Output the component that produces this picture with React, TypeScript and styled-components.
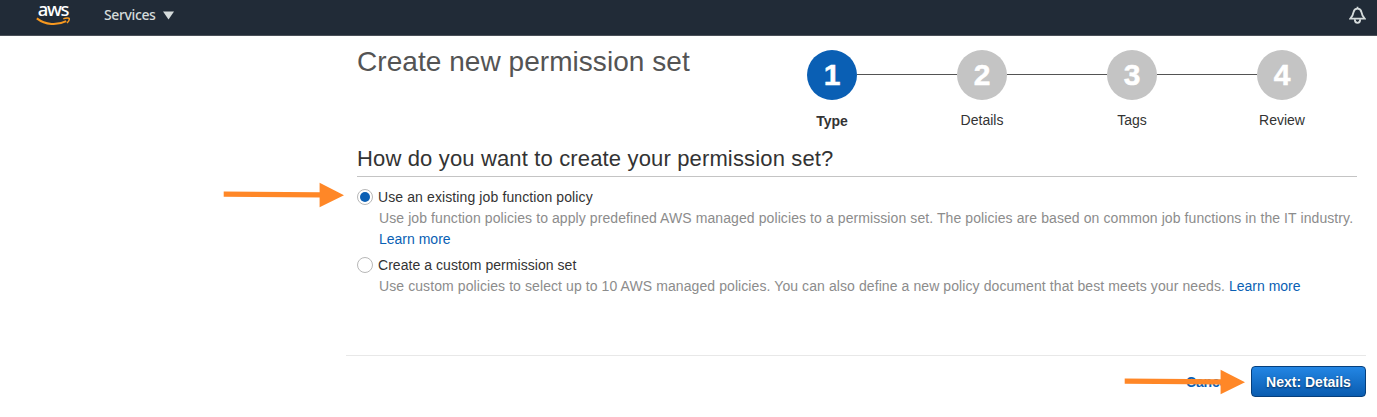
import React from "react";
import styled, { createGlobalStyle } from "styled-components";

const GlobalStyle = createGlobalStyle`
  * { box-sizing: border-box; }
  body {
    margin: 0;
    background: #fff;
    color: #333;
    font: 14px/21px "Liberation Sans", Arial, sans-serif;
    overflow: hidden;
  }
`;

const Page = styled.div`
  position: relative;
  height: 417px;
`;

const TopBar = styled.header`
  display: flex;
  align-items: flex-start;
  height: 36px;
  padding: 0 11px 0 36px;
  background: #212b37;
  border-bottom: 1px solid #4a5058;
`;

const Logo = styled.div`
  display: flex;
  flex-direction: column;
  align-items: center;
  width: 34px;
  color: #fff;
  font: 500 18.5px/17px "Noto Sans", sans-serif;
  letter-spacing: -1.4px;

  svg { display: block; }
`;

const ServicesMenu = styled.div`
  display: flex;
  align-items: center;
  gap: 7px;
  height: 29px;
  margin-left: 34px;
  color: #d5dbdb;
  font: 500 14px/20px "Noto Sans", sans-serif;
  letter-spacing: -0.38px;

  svg { margin-top: 2px; }
`;

const Bell = styled.svg`
  display: block;
  margin: 6px 0 0 auto;
`;

const Main = styled.main`
  width: 1000px;
  margin-left: 357px;
`;

const Heading = styled.div`
  display: flex;
  justify-content: space-between;
  height: 107px;
`;

const Title = styled.h1`
  margin: 8px 0 0;
  color: #545454;
  font-size: 28px;
  font-weight: 400;
  letter-spacing: 0.05px;
  line-height: 36px;
  white-space: nowrap;
`;

const Steps = styled.ol`
  display: flex;
  list-style: none;
  margin: 14px 0 0;
  padding: 0;
`;

const Step = styled.li<{ $active?: boolean }>`
  position: relative;
  display: flex;
  flex-direction: column;
  align-items: center;
  width: 150px;
  font-weight: ${(p) => (p.$active ? 700 : 400)};

  &:not(:last-child)::after {
    content: "";
    position: absolute;
    top: 24px;
    left: 100px;
    width: 100px;
    height: 1px;
    background: #545454;
  }
`;

const StepNumber = styled.span<{ $active?: boolean }>`
  width: 50px;
  height: 50px;
  border-radius: 50%;
  background: ${(p) => (p.$active ? "#0a5fb4" : "#c4c4c4")};
  color: #fff;
  font-size: 30px;
  font-weight: 700;
  line-height: 50px;
  text-align: center;
  -webkit-text-stroke: 0.5px #fff;
`;

const StepLabel = styled.span<{ $active?: boolean }>`
  margin-top: ${(p) => (p.$active ? 11 : 10)}px;
`;

const Question = styled.h2`
  height: 34px;
  margin: 0 0 10px;
  border-bottom: 1px solid #c4c4c4;
  font-size: 22px;
  font-weight: 400;
  letter-spacing: 0.15px;
  line-height: 31px;
`;

const Option = styled.div`
  display: grid;
  grid-template-columns: 16px 1fr;
  column-gap: 5px;
  margin-bottom: 5px;
`;

const Radio = styled.span<{ $checked?: boolean }>`
  display: grid;
  place-items: center;
  width: 16px;
  height: 16px;
  margin-top: 2px;
  border: 1px solid #b8b8b8;
  border-radius: 50%;

  &::after {
    content: "";
    width: 10px;
    height: 10px;
    border-radius: 50%;
    background: ${(p) => (p.$checked ? "#0a5fb4" : "transparent")};
  }
`;

const OptionLabel = styled.label<{ $spacing: number }>`
  color: #333;
  letter-spacing: ${(p) => p.$spacing}px;
`;

const Description = styled.p`
  grid-column: 2;
  margin: 0 0 0 1px;
  color: #8c8c8c;
  letter-spacing: 0.088px;
  white-space: nowrap;
`;

const Link = styled.a`
  color: #0a5fb4;
  letter-spacing: 0;
`;

const Footer = styled.footer`
  display: flex;
  justify-content: flex-end;
  align-items: center;
  gap: 20px;
  width: 1020px;
  margin: 58px 0 0 346px;
  padding-top: 10px;
  border-top: 1px solid #e8e8e8;
`;

const CancelLink = styled.a`
  padding-top: 2px;
  color: #0a5fb4;
  font-weight: 700;
  letter-spacing: -0.15px;
`;

const NextButton = styled.button`
  width: 115px;
  height: 31px;
  padding: 2px 0 0;
  border: 1px solid #063f7c;
  border-radius: 4px;
  background: linear-gradient(#2386e4, #0a5cb0);
  color: #fff;
  font: 700 14px/27px "Liberation Sans", Arial, sans-serif;
  text-shadow: 0 1px 2px #052b54;
`;

const Arrow = styled.svg<{ $x: number; $y: number }>`
  position: absolute;
  left: ${(p) => p.$x}px;
  top: ${(p) => p.$y}px;
`;

const steps = ["Type", "Details", "Tags", "Review"];

const Pointer = ({ x, y }: { x: number; y: number }) => (
  <Arrow $x={x} $y={y} width="122" height="26" viewBox="0 0 122 26">
    <path d="M.7 9.4 96.6 10.2V.7L121 13.2 96.6 25.3V15.6L.7 14.8Z" fill="#ff8727" />
  </Arrow>
);

export default function App() {
  return (
    <Page>
      <GlobalStyle />
      <TopBar>
        <Logo>
          aws
          <svg width="34" height="9" viewBox="0 0 34 9">
            <path d="M.8 1.4C9.5 8.1 21 8.7 30.2 4.1" fill="none" stroke="#f7981f" strokeWidth="2" />
            <path d="M27.3 1.9C30 .9 33 .9 33.2 1.5 33.5 2.4 32.5 4.6 31 6" fill="none" stroke="#f7981f" strokeWidth="1.5" />
          </svg>
        </Logo>
        <ServicesMenu>
          Services
          <svg width="11" height="9" viewBox="0 0 11 9">
            <path d="M0 .5H11L5.5 8.5Z" fill="#d5dbdb" />
          </svg>
        </ServicesMenu>
        <Bell width="17" height="18" viewBox="0 0 17 18">
          <g fill="none" stroke="#d5dbdb" strokeWidth="1.8">
            <path d="M8.5.8V2.6M8.5 2.6C6 2.6 5 4 4.6 6 4 9.2 3 11 1.3 12.7H15.7C14 11 13 9.2 12.4 6 12 4 11 2.6 8.5 2.6Z" />
            <path d="M5.8 13.2C5.8 18 11.2 18 11.2 13.2" />
          </g>
        </Bell>
      </TopBar>
      <Main>
        <Heading>
          <Title>Create new permission set</Title>
          <Steps>
            {steps.map((label, i) => (
              <Step key={label} $active={i === 0}>
                <StepNumber $active={i === 0}>{i + 1}</StepNumber>
                <StepLabel $active={i === 0}>{label}</StepLabel>
              </Step>
            ))}
          </Steps>
        </Heading>
        <Question>How do you want to create your permission set?</Question>
        <Option>
          <Radio $checked />
          <OptionLabel $spacing={0.11}>Use an existing job function policy</OptionLabel>
          <Description>
            Use job function policies to apply predefined AWS managed policies to a permission set. The policies are based on common job functions in the IT industry.
            <br />
            <Link>Learn more</Link>
          </Description>
        </Option>
        <Option>
          <Radio />
          <OptionLabel $spacing={0.05}>Create a custom permission set</OptionLabel>
          <Description>
            Use custom policies to select up to 10 AWS managed policies. You can also define a new policy document that best meets your needs.{" "}
            <Link>Learn more</Link>
          </Description>
        </Option>
      </Main>
      <Footer>
        <CancelLink>Cancel</CancelLink>
        <NextButton>Next: Details</NextButton>
      </Footer>
      <Pointer x={223} y={182} />
      <Pointer x={1124} y={369} />
    </Page>
  );
}
